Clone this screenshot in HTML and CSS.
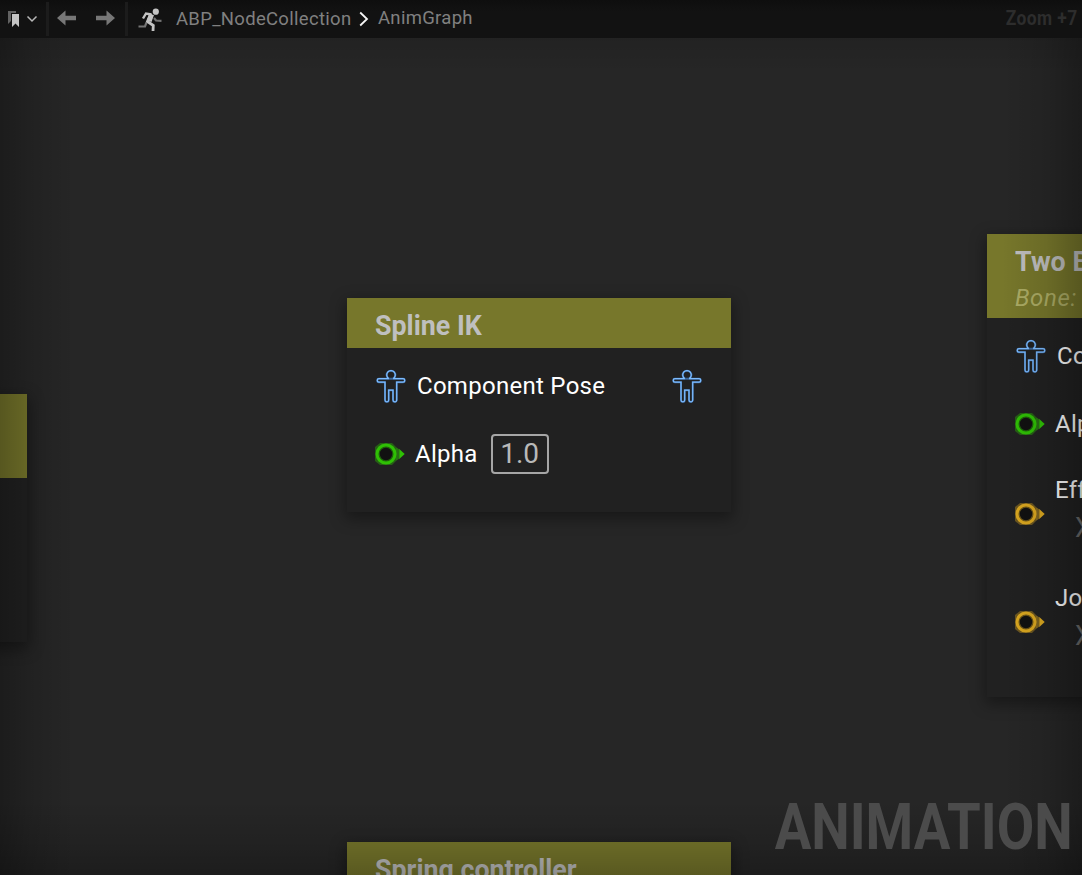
FILE: index.html
```html
<!DOCTYPE html>
<html lang="en">
<head>
<meta charset="utf-8">
<title>AnimGraph</title>
<link rel="stylesheet" href="styles.css">
</head>
<body>
<svg class="defs" aria-hidden="true">
  <defs>
    <symbol id="pose" viewBox="0 0 30 34">
      <path d="M12.9 9.7A4.3 4.3 0 1 1 17.1 9.7M12.9 9.7H3a1.7 1.7 0 0 0 0 3.5H9V31a1.8 1.8 0 0 0 3.7 0V21.2H17V31a1.8 1.8 0 0 0 3.7 0V13.2H27a1.7 1.7 0 0 0 0-3.5H17.1M12.9 9.7H17.1" fill="none" stroke="#3b6699" stroke-width="2"/>
      <path d="M12.9 9.7A4.3 4.3 0 1 1 17.1 9.7M12.9 9.7H3a1.7 1.7 0 0 0 0 3.5H9V31a1.8 1.8 0 0 0 3.7 0V21.2H17V31a1.8 1.8 0 0 0 3.7 0V13.2H27a1.7 1.7 0 0 0 0-3.5H17.1" fill="none" stroke="#7dbcff" stroke-width="1.2"/>
    </symbol>
    <symbol id="pin" viewBox="0 0 30 22">
      <path d="M5 0H17L22 5V17L17 22H5L0 18V4Z" fill="currentColor" opacity=".4"/>
      <circle cx="11" cy="11" r="9" fill="#111" stroke="currentColor" stroke-width="3"/>
      <circle cx="11" cy="11" r="7.200" fill="none" stroke="currentColor" stroke-width="2" opacity=".45"/>
      <path d="M21.500 4.500L24.500 6.500V15.500L21.500 17.500Z" fill="currentColor" opacity=".5"/>
      <path d="M24.300 6L29.700 11L24.300 16Z" fill="currentColor"/>
    </symbol>
  </defs>
</svg>
<div class="editor">
  <header class="bar">
    <div class="tool bookmarks">
      <svg width="48" height="38" viewBox="0 0 48 38"><path d="M8 11H16V13H11V21L8 24Z" fill="#626262"/><path d="M12 14H19V27L15.500 23.500L12 27Z" fill="#c4c4c4"/><path d="M27.500 16.500L32 21L36.500 16.500" fill="none" stroke="#b8b8b8" stroke-width="1.500"/></svg>
    </div>
    <div class="tool arrows">
      <svg width="76" height="38" viewBox="0 0 76 38"><path d="M8 18L16.500 10.500V15.700H27V20.300H16.500V25.500Z" fill="#777"/><path d="M66 18L57.500 10.500V15.700H47V20.300H57.500V25.500Z" fill="#777"/></svg>
    </div>
    <svg class="runner" width="26" height="26" viewBox="0 0 26 26"><circle cx="18.800" cy="4.700" r="3.100" fill="#c4c4c4"/><path d="M17 11L19 13.500L24.500 13.800M9.500 15.500L8 19.500H1.500" fill="none" stroke="#747474" stroke-width="2.200"/><path d="M6 11.500L9 6.500L14.500 7.500" fill="none" stroke="#c4c4c4" stroke-width="2.400"/><path d="M14 7L10.500 14.500L16.300 18.500L16 24" fill="none" stroke="#c4c4c4" stroke-width="2.800"/><path d="M12 7L17 8L14.500 15L9.500 13.500Z" fill="#c4c4c4"/></svg>
    <span class="crumb root">ABP_NodeCollection</span>
    <svg class="sep" width="10" height="16" viewBox="0 0 10 16"><path d="M1.200 1.500L8 8L1.200 14.500" fill="none" stroke="#f5f5f5" stroke-width="1.800"/></svg>
    <span class="crumb leaf">AnimGraph</span>
    <span class="zoom">Zoom +7</span>
  </header>
  <main class="canvas">
    <section class="node node-left"><div class="head tall"></div></section>

    <section class="node node-spline">
      <div class="head"><h2 class="title">Spline IK</h2></div>
      <div class="row pose-row"><svg class="pose"><use href="#pose"/></svg><span class="label pose-label">Component Pose</span><svg class="pose out"><use href="#pose"/></svg></div>
      <div class="row"><svg class="pin green"><use href="#pin"/></svg><span class="label">Alpha</span><span class="value">1.0</span></div>
    </section>

    <section class="node node-bone">
      <div class="head tall"><h2 class="title">Two Bone IK</h2><p class="subtitle">Bone: None</p></div>
      <div class="row pose-row"><svg class="pose"><use href="#pose"/></svg><span class="label pose-label">Component Pose</span></div>
      <div class="row"><svg class="pin green"><use href="#pin"/></svg><span class="label">Alpha</span></div>
      <div class="row vector"><svg class="pin gold"><use href="#pin"/></svg><div class="stack"><span class="label">Effector Location</span><span class="axis">X</span></div></div>
      <div class="row vector"><svg class="pin gold"><use href="#pin"/></svg><div class="stack"><span class="label">Joint Target Location</span><span class="axis">X</span></div></div>
    </section>

    <section class="node node-spring">
      <div class="head"><h2 class="title">Spring controller</h2></div>
    </section>
    <div class="vignette"></div>
    <div class="watermark">ANIMATION</div>
  </main>
</div>
</body>
</html>
```
FILE: styles.css
```css
* { box-sizing: border-box; }
body { margin: 0; background: #262626; font-family: Roboto, sans-serif; }
h2, p { margin: 0; }
.defs { position: absolute; width: 0; height: 0; }
.editor { width: 1082px; height: 875px; display: flex; flex-direction: column; overflow: hidden; }
.bar { height: 38px; flex: none; display: flex; align-items: center; background: linear-gradient(#0e0e0e, #121212 30%, #121212); color: #808080; white-space: nowrap; }
.tool { height: 38px; flex: none; }
.tool svg { display: block; }
.bookmarks { width: 49px; background: linear-gradient(#1c1c1c, #1c1c1c) right 2px / 3px 34px no-repeat; }
.arrows { width: 79px; background: linear-gradient(#1c1c1c, #1c1c1c) right 2px / 3px 34px no-repeat; }
.runner { flex: none; margin: 1px 0 0 9px; }
.crumb { font-size: 18.5px; line-height: 24px; letter-spacing: 0.3px; }
.root { width: 175px; margin-left: 13px; }
.sep { flex: none; margin-left: 8px; }
.leaf { margin: -2px 0 0 9px; }
.zoom { margin: -3px 4px 0 auto; font-size: 20px; font-weight: 700; color: #2d2d2d; transform: scaleX(.87); transform-origin: right; letter-spacing: .5px; }
.canvas { position: relative; flex: 1; overflow: hidden; background: #262626; }
.node { position: absolute; width: 384px; background: #212121; box-shadow: 0 5px 14px 2px rgba(0, 0, 0, .36); white-space: nowrap; }
.node-left { left: -357px; top: 356px; height: 248px; }
.node-spline { left: 347px; top: 260px; height: 214px; }
.node-bone { left: 987px; top: 196px; height: 463px; }
.node-spring { left: 347px; top: 804px; height: 214px; }
.head { height: 50px; padding: 11px 28px 0; background: #77772b; }
.head.tall { height: 84px; }
.title { width: max-content; font-size: 28px; line-height: 34px; font-weight: 700; color: #bfbfbf; transform: scaleX(.957); transform-origin: left; }
.subtitle { font-size: 24px; line-height: 36px; margin-top: 1px; letter-spacing: .6px; font-style: italic; color: #acac65; }
.row { height: 60px; display: flex; align-items: center; padding: 0 28px; }
.pose-row { height: 76px; }
.pose { width: 30px; height: 34px; flex: none; margin-left: 1px; }
.pose.out { margin: 0 1px 0 auto; }
.label { font-size: 24px; line-height: 30px; letter-spacing: .28px; color: #fff; }
.pose-label { margin-left: 11px; }
.pin { width: 30px; height: 22px; flex: none; margin-right: 10px; }
.green { color: #2fc005; }
.gold { color: #dba820; }
.value { width: 58px; height: 40px; margin-left: 13px; border: 2px solid #a6a6a6; border-radius: 4px; font-size: 28px; line-height: 36px; text-align: center; color: #b9b9b9; }
.vector { height: 108px; align-items: center; }
.vector .pin { margin-top: 12px; }
.stack { display: flex; flex-direction: column; padding-top: 2px; }
.axis { margin: 8px 0 0 20px; font-size: 27px; line-height: 30px; color: #6b6b6b; }
.vignette { position: absolute; inset: 0; background: linear-gradient(90deg, rgba(0,0,0,.27), rgba(0,0,0,.13) 30px, transparent 75px), linear-gradient(270deg, rgba(0,0,0,.27), rgba(0,0,0,.1) 36px, transparent 80px), linear-gradient(0deg, rgba(0,0,0,.25), rgba(0,0,0,.12) 30px, transparent 75px), linear-gradient(180deg, rgba(0,0,0,.1), transparent 35px); }
.watermark { position: absolute; right: 9px; bottom: 9px; font-size: 65px; line-height: 78px; font-weight: 700; color: #4b4b4b; transform: scaleX(.838); transform-origin: right; }
```
